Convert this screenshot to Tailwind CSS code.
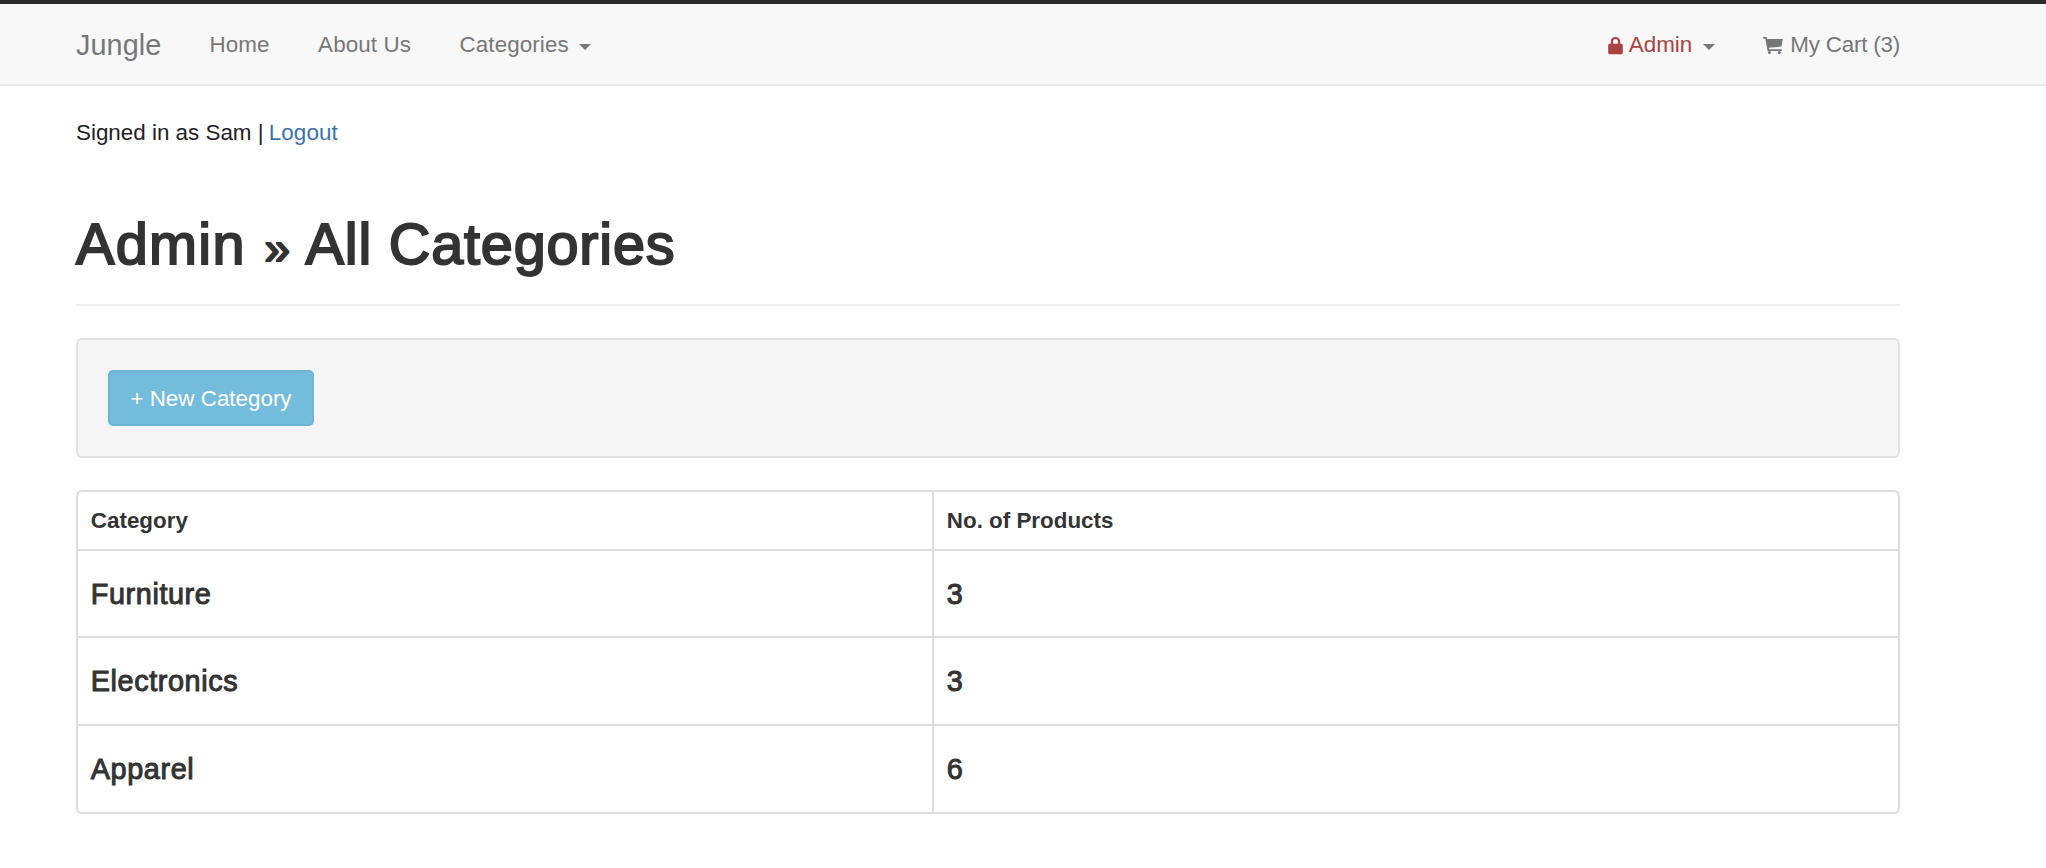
<!doctype html>
<html lang="en">
<head>
    <meta charset="UTF-8" />
    <meta name="viewport" content="width=device-width, initial-scale=1.0" />
    <title>Jungle - Admin Categories</title>
    <script src="https://cdn.jsdelivr.net/npm/@tailwindcss/browser@4"></script>
</head>
<body class="font-['Liberation_Sans',Arial,sans-serif] text-[22.4px] leading-[32px] text-[#333] bg-white">
    <!-- navbar -->
    <nav class="h-[86px] border-t-4 border-t-[#2a2a2a] border-b-2 border-b-[#e7e7e7] bg-[#f8f8f8]">
        <div class="w-[1824px] ml-[76px] h-[80px] pt-[2px] flex items-center text-[#777]">
            <a href="#" class="text-[28.8px] tracking-[0.1px] mr-[48px]">Jungle</a>
            <ul class="flex gap-[48.5px] tracking-[0.1px]">
                <li><a href="#">Home</a></li>
                <li><a href="#">About Us</a></li>
                <li class="flex items-center"><a href="#">Categories</a><span class="ml-[10px] mt-[3px] border-t-[6.4px] border-x-[6.4px] border-x-transparent border-t-[#777]"></span></li>
            </ul>
            <ul class="ml-auto flex items-center gap-[48px]">
                <li class="flex items-center">
                    <svg class="w-[15px] h-[19px] mr-[6px] text-[#a94442]" viewBox="0 0 16 20" fill="currentColor"><path d="M3 8V5.500C3 2.500 5 .8 8 .8s5 1.700 5 4.700V8h1.200c.9 0 1.600.7 1.600 1.600v8.200c0 .9-.7 1.600-1.600 1.600H1.800c-.9 0-1.600-.7-1.600-1.600V9.600c0-.9.7-1.600 1.600-1.600H3zm2.500 0h5V5.500c0-1.500-1-2.400-2.500-2.400s-2.500.9-2.500 2.400V8z"/></svg>
                    <a href="#" class="text-[#a94442]">Admin</a>
                    <span class="ml-[11px] mt-[3px] border-t-[6.4px] border-x-[6.4px] border-x-transparent border-t-[#777]"></span>
                </li>
                <li class="flex items-center">
                    <svg class="w-[20px] h-[18px] mr-[7px]" viewBox="0 0 22 20" fill="currentColor"><path d="M0 1h3.800l.6 2.200H22l-1.700 8.500-14 1.300.4 1.700h14v2H5L2.500 3H0V1z"/><circle cx="7" cy="18.300" r="1.700"/><circle cx="18" cy="18.300" r="1.700"/></svg>
                    <a href="#" class="tracking-[-0.2px]">My Cart (3)</a>
                </li>
            </ul>
        </div>
    </nav>

    <main class="w-[1824px] ml-[76px]">
        <p class="mt-[31px] text-[#222]">Signed in as Sam | <a href="#" class="-ml-[1px] tracking-[0.1px] text-[#3a72b0]">Logout</a></p>

        <header class="mt-[63px] pb-[28px] border-b-2 border-b-[#eee]">
            <h1 class="text-[57.6px] leading-[64px] tracking-[0.8px] text-[#333] [-webkit-text-stroke:2px_#333]"><span class="tracking-[1.3px]">Admin</span> <span class="text-[46px] leading-[0] ml-[2px] mr-[1px]">»</span> All Categories</h1>
        </header>

        <div class="mt-[32px] h-[120px] flex items-center px-[30px] bg-[#f5f5f5] border-2 border-[#e3e3e3] rounded-[6px]">
            <a href="#" class="h-[56px] w-[206px] pt-[1px] flex items-center justify-center bg-[#73bcdc] border-2 border-[#6cb5d6] rounded-[5px] text-white">+ New Category</a>
        </div>

        <div class="mt-[32px] w-[1824px] border-2 border-[#ddd] rounded-[6px] shadow-[0_1px_2px_rgba(0,0,0,0.08)] overflow-hidden">
            <table class="w-full table-fixed border-collapse">
                <colgroup>
                    <col class="w-[855px]" />
                    <col />
                </colgroup>
                <thead>
                    <tr class="h-[58px] border-b-2 border-b-[#ddd]">
                        <th class="px-[12.800px] text-left border-r-2 border-r-[#ddd]">Category</th>
                        <th class="px-[12.800px] text-left">No. of Products</th>
                    </tr>
                </thead>
                <tbody class="text-[28.8px] tracking-[0.6px] [-webkit-text-stroke:1px_#333]">
                    <tr class="h-[87px] border-b-2 border-b-[#ddd]">
                        <td class="px-[12.800px] border-r-2 border-r-[#ddd]">Furniture</td>
                        <td class="px-[12.800px]">3</td>
                    </tr>
                    <tr class="h-[88px] border-b-2 border-b-[#ddd]">
                        <td class="px-[12.800px] border-r-2 border-r-[#ddd]">Electronics</td>
                        <td class="px-[12.800px]">3</td>
                    </tr>
                    <tr class="h-[87px]">
                        <td class="px-[12.800px] border-r-2 border-r-[#ddd]">Apparel</td>
                        <td class="px-[12.800px]">6</td>
                    </tr>
                </tbody>
            </table>
        </div>
    </main>
</body>
</html>
